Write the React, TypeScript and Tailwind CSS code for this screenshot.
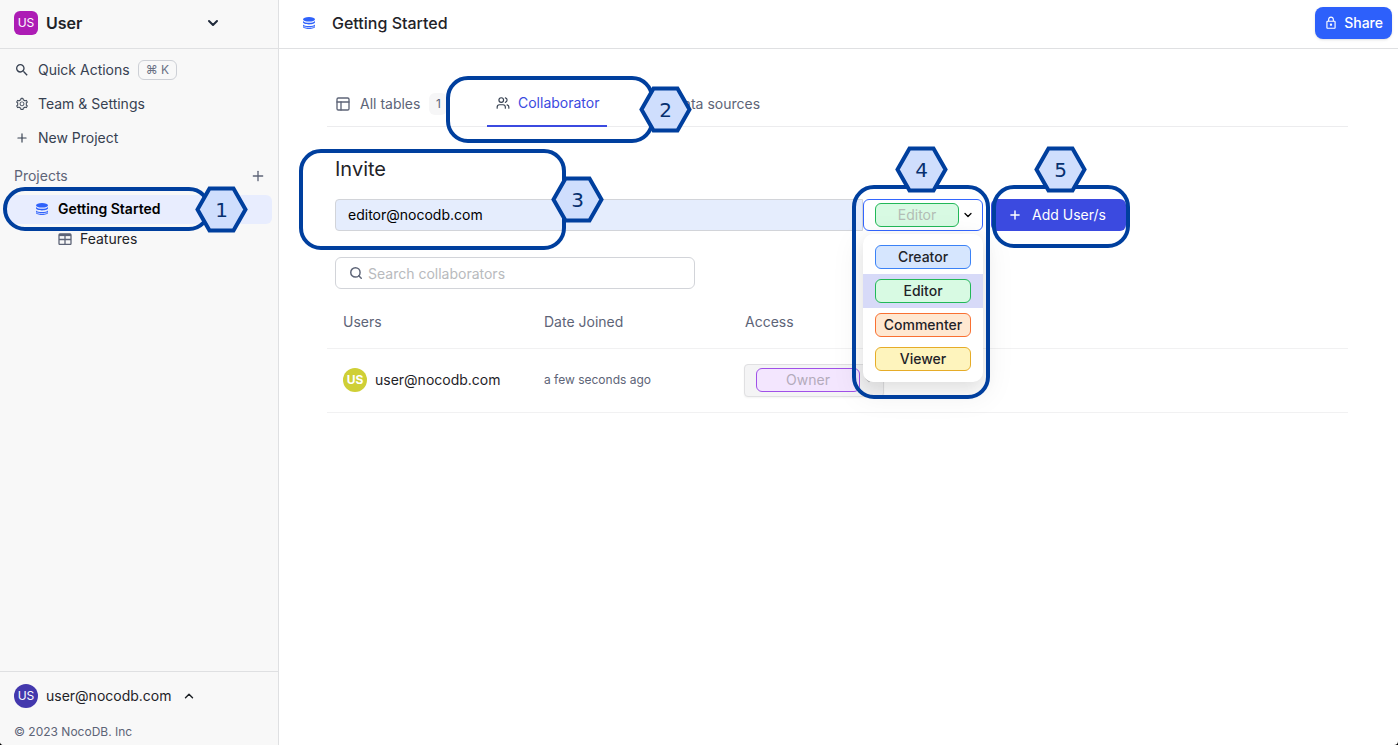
import type { ReactNode } from "react";
import { ChevronDown, ChevronUp, PanelsTopLeft, Plus, Search, Users } from "lucide-react";
import { AiOutlineSetting } from "react-icons/ai";
import { MdOutlineLock, MdSearch } from "react-icons/md";

function DatabaseIcon({ className = "" }: { className?: string }) {
  return (
    <svg viewBox="0 0 12 12" className={`h-3 w-3 shrink-0 ${className}`} fill="#2f62fb" aria-hidden="true">
      <ellipse cx="6" cy="2.3" rx="6" ry="2.3" />
      <path d="M0 3.900c1 1.300 3.300 1.800 6 1.800s5-.5 6-1.800v1.400c0 1.200-2.700 2.100-6 2.100s-6-.9-6-2.100z" />
      <path d="M0 7.500c1 1.100 3.300 1.600 6 1.600s5-.5 6-1.600v2.200c0 1.300-2.700 2.200-6 2.200s-6-.9-6-2.200z" />
      <path d="M.4 9.300c1.200.9 3.200 1.300 5.600 1.300s4.400-.4 5.600-1.300" fill="none" stroke="#fff" strokeWidth=".7" />
    </svg>
  );
}

function TableIcon() {
  return (
    <svg viewBox="0 0 14 12" className="h-3 w-[14px] shrink-0" fill="none" stroke="#5d6477" aria-hidden="true">
      <rect x="1" y="1" width="12" height="10.500" rx="1" strokeWidth="1.300" />
      <path d="M1 2h12" strokeWidth="2.200" />
      <path d="M7 2v9.500M1 6.500h12" strokeWidth="1.300" />
    </svg>
  );
}

function Callout({ n, box, badge }: { n: number; box: string; badge: string }) {
  return (
    <>
      <span className={`pointer-events-none absolute z-30 border-4 border-[#003f9e] ${box}`} />
      <span className={`pointer-events-none absolute z-40 grid h-[47px] w-[53px] place-items-center ${badge}`}>
        <svg viewBox="0 0 53 47" className="col-start-1 row-start-1 h-[47px] w-[53px]" aria-hidden="true">
          <path d="M14.500 2.500h24l12 21-12 21h-24l-12-21z" fill="#cfdefd" stroke="#003f9e" strokeWidth="4" />
        </svg>
        <span className="col-start-1 row-start-1 font-['DejaVu_Sans',sans-serif] text-[20px] leading-6 text-[#06306f]">{n}</span>
      </span>
    </>
  );
}

function SideItem({ icon, children }: { icon: ReactNode; children: ReactNode }) {
  return (
    <button className="flex h-[34px] w-full items-center gap-2 px-[14px] text-left text-[#374151]">
      <span className="grid w-4 place-items-center">{icon}</span>
      {children}
    </button>
  );
}

const roles = [
  { name: "Creator", tone: "border-[#3b82f6] bg-[#d6e6fe]", row: "" },
  { name: "Editor", tone: "border-[#22b858] bg-[#d8fae3]", row: "bg-[#d7daf8]" },
  { name: "Commenter", tone: "border-[#f97032] bg-[#ffe8d1]", row: "" },
  { name: "Viewer", tone: "border-[#e6ac28] bg-[#fef4bd]", row: "" },
];

export default function App() {
  return (
    <div className="bg-black">
      <div className="flex h-screen overflow-hidden rounded-b-[4px] bg-white font-[Inter,sans-serif] text-sm text-[#1f2328]">
        <aside className="flex w-[279px] shrink-0 flex-col border-r border-[#dfe0e2] bg-[#f8f8f8]">
          <button className="flex h-[49px] shrink-0 items-center border-b border-[#dfe0e2] px-[14px] pb-[2px] text-left">
            <span className="grid h-6 w-6 place-items-center rounded-md bg-[#ad1cb5] text-xs text-white">US</span>
            <span className="ml-2 flex-1 text-base font-semibold">User</span>
            <ChevronDown className="mr-[43px] h-4 w-4 text-[#1f293a]" strokeWidth={3} />
          </button>
          <nav className="pt-1">
            <SideItem icon={<MdSearch className="h-4 w-4" />}>
              Quick Actions
              <kbd className="flex h-5 items-center rounded-md border border-[#cdd0d6] px-[7px] font-[Inter,sans-serif] text-xs text-[#6a7184]">⌘ K</kbd>
            </SideItem>
            <SideItem icon={<AiOutlineSetting className="h-[14px] w-[14px]" />}>Team &amp; Settings</SideItem>
            <SideItem icon={<Plus className="h-[14px] w-[14px]" />}>New Project</SideItem>
            <div className="flex h-10 items-center justify-between pt-[2px] pr-3 pl-[14px] text-[#5d6477]">
              <h2>Projects</h2>
              <button aria-label="Add project"><Plus className="h-4 w-4" /></button>
            </div>
            <div className="relative">
              <a href="#project" className="mx-[6px] flex h-[29px] items-center gap-[10px] rounded-md bg-[#e8edfe] pb-[2px] pl-[30px] font-semibold text-black">
                <DatabaseIcon />
                Getting Started
              </a>
              <Callout n={1} box="-top-2 left-[3px] h-11 w-[208px] rounded-[22px]" badge="-top-[9px] left-[195px]" />
            </div>
            <a href="#features" className="flex h-[30px] items-center gap-2 pl-[58px]">
              <TableIcon />
              Features
            </a>
          </nav>
          <footer className="mt-auto border-t border-[#dfe0e2] px-[14px] pt-3">
            <button className="flex items-center">
              <span className="grid h-6 w-6 place-items-center rounded-full bg-[#4338ad] text-xs text-white">US</span>
              <span className="ml-2">user@nocodb.com</span>
              <ChevronUp className="ml-[10px] h-[14px] w-[14px]" strokeWidth={2.5} />
            </button>
            <p className="mt-4 mb-[5px] text-xs leading-4 text-[#5d6477]">© 2023 NocoDB. Inc</p>
          </footer>
        </aside>

        <div className="flex min-w-0 flex-1 flex-col">
          <header className="flex h-[49px] shrink-0 items-center border-b border-[#dfe0e2] pr-[6px] pb-[2px] pl-6">
            <DatabaseIcon />
            <h1 className="ml-[17px] flex-1 text-base font-medium">Getting Started</h1>
            <button className="flex h-8 items-center gap-[6px] rounded-lg bg-[#2d60fb] px-[9px] font-medium text-white shadow-sm">
              <MdOutlineLock className="h-[14px] w-[14px]" />
              Share
            </button>
          </header>

          <main className="pt-8 pr-[50px] pl-12">
            <div role="tablist" className="flex h-[46px] border-b border-[#ececee] text-[#5d6477]">
              <button role="tab" aria-selected="false" className="flex w-40 items-center pl-2">
                <PanelsTopLeft className="h-4 w-4" />
                <span className="ml-[9px]">All tables</span>
                <span className="ml-[9px] grid h-[22px] w-[18px] place-items-center rounded-md bg-[#f6f6f7] text-xs">1</span>
              </button>
              <div className="relative">
                <button role="tab" aria-selected="true" className="flex h-[46px] w-[120px] items-center gap-2 border-b-2 border-[#3b4ae0] pl-[9px] text-[#3b4ae0]">
                  <Users className="h-[14px] w-[14px] text-[#374151]" />
                  Collaborator
                </button>
                <Callout n={2} box="-top-[5px] -left-[41px] h-[67px] w-[208px] rounded-[22px]" badge="top-[5px] left-[152px]" />
              </div>
              <button role="tab" aria-selected="false" className="ml-auto flex flex-1 items-center pl-[66px]">Data sources</button>
            </div>

            <section className="relative pt-[30px] pl-2">
              <label htmlFor="invite" className="block text-xl leading-6">Invite</label>
              <form className="mt-[18px] flex">
                <input id="invite" type="email" defaultValue="editor@nocodb.com" className="h-8 w-[528px] rounded-l border border-[#d2d4d9] bg-[#e5edfd] px-3 pb-[2px] text-black outline-none" />
                <div className="relative w-[120px]">
                  <label className="flex h-8 items-center rounded-md border border-[#3366ff] bg-white pl-[11px]">
                    <span className="sr-only">Role</span>
                    <select defaultValue="Editor" className="h-6 w-[84px] appearance-none rounded-md border border-[#22b858] bg-[#d8fae3] text-center leading-5 text-[#b3bdb5] outline-none">
                      {roles.map((r) => <option key={r.name}>{r.name}</option>)}
                    </select>
                    <ChevronDown className="ml-[3px] h-3 w-3 text-black" strokeWidth={2.5} />
                  </label>
                  <ul role="listbox" aria-label="Roles" className="absolute top-[35px] left-0 z-20 w-[120px] overflow-hidden rounded-[10px] bg-white py-[6px] shadow-[0_6px_16px_rgba(0,0,0,0.08),0_9px_28px_8px_rgba(0,0,0,0.05)]">
                    {roles.map((r) => (
                      <li key={r.name} role="option" aria-selected={r.name === "Editor"} className={`flex h-[34px] items-center px-3 ${r.row}`}>
                        <span className={`flex h-6 flex-1 items-center justify-center rounded-md border font-medium ${r.tone}`}>{r.name}</span>
                      </li>
                    ))}
                  </ul>
                  <Callout n={4} box="-top-[14px] -left-[11px] h-[214px] w-[138px] rounded-[22px]" badge="-top-[53px] left-8" />
                </div>
                <div className="relative ml-2">
                  <button type="button" className="flex h-8 w-[135px] items-center gap-[10px] rounded-md bg-[#3b4ae0] pl-[17px] text-white">
                    <Plus className="h-[14px] w-[14px]" strokeWidth={2.5} />
                    Add User/s
                  </button>
                  <Callout n={5} box="-top-[14px] left-[1px] h-[63px] w-[138px] rounded-[22px]" badge="-top-[53px] left-[43px]" />
                </div>
              </form>
              <Callout n={3} box="top-[22px] -left-7 h-[101px] w-[267px] rounded-[22px]" badge="top-[49px] left-[224px]" />
            </section>

            <label className="mt-[26px] ml-2 flex h-8 w-[360px] items-center gap-[5px] rounded-md border border-[#d2d4d9] px-[13px]">
              <Search className="h-[14px] w-[14px] text-[#5d6477]" strokeWidth={2.5} />
              <span className="sr-only">Search collaborators</span>
              <input type="search" placeholder="Search collaborators" className="h-7 min-w-0 flex-1 appearance-none leading-5 outline-none placeholder:text-[#b8babd]" />
            </label>

            <table className="mt-[7px] w-full table-fixed text-left">
              <thead>
                <tr className="h-[52px] border-b border-[#f1f1f2] text-[#5d6477]">
                  <th className="w-[201px] pl-4 font-normal">Users</th>
                  <th className="w-[201px] pl-4 font-normal">Date Joined</th>
                  <th className="pl-4 font-normal">Access</th>
                </tr>
              </thead>
              <tbody>
                <tr className="h-16 border-b border-[#f1f1f2]">
                  <td className="pl-4">
                    <div className="flex items-center gap-2">
                      <span className="grid h-6 w-6 place-items-center rounded-full bg-[#cfcf36] text-xs font-bold text-white">US</span>
                      user@nocodb.com
                    </div>
                  </td>
                  <td className="pl-4 text-xs text-[#5d6477]">a few seconds ago</td>
                  <td className="pl-[15px]">
                    <label className="flex h-[33px] w-[140px] items-center rounded border border-[#e0e0e2] bg-[#f4f4f5] pl-[11px] shadow-xs">
                      <span className="sr-only">Access</span>
                      <select disabled className="h-6 w-[104px] appearance-none rounded-md border border-[#a050e8] bg-[#f3e6fe] text-center leading-5 text-[#b3abbb] opacity-100">
                        <option>Owner</option>
                      </select>
                      <ChevronDown className="ml-[3px] h-3 w-3 text-[#bdbdbf]" strokeWidth={2.5} />
                    </label>
                  </td>
                </tr>
              </tbody>
            </table>
          </main>
        </div>
      </div>
    </div>
  );
}
